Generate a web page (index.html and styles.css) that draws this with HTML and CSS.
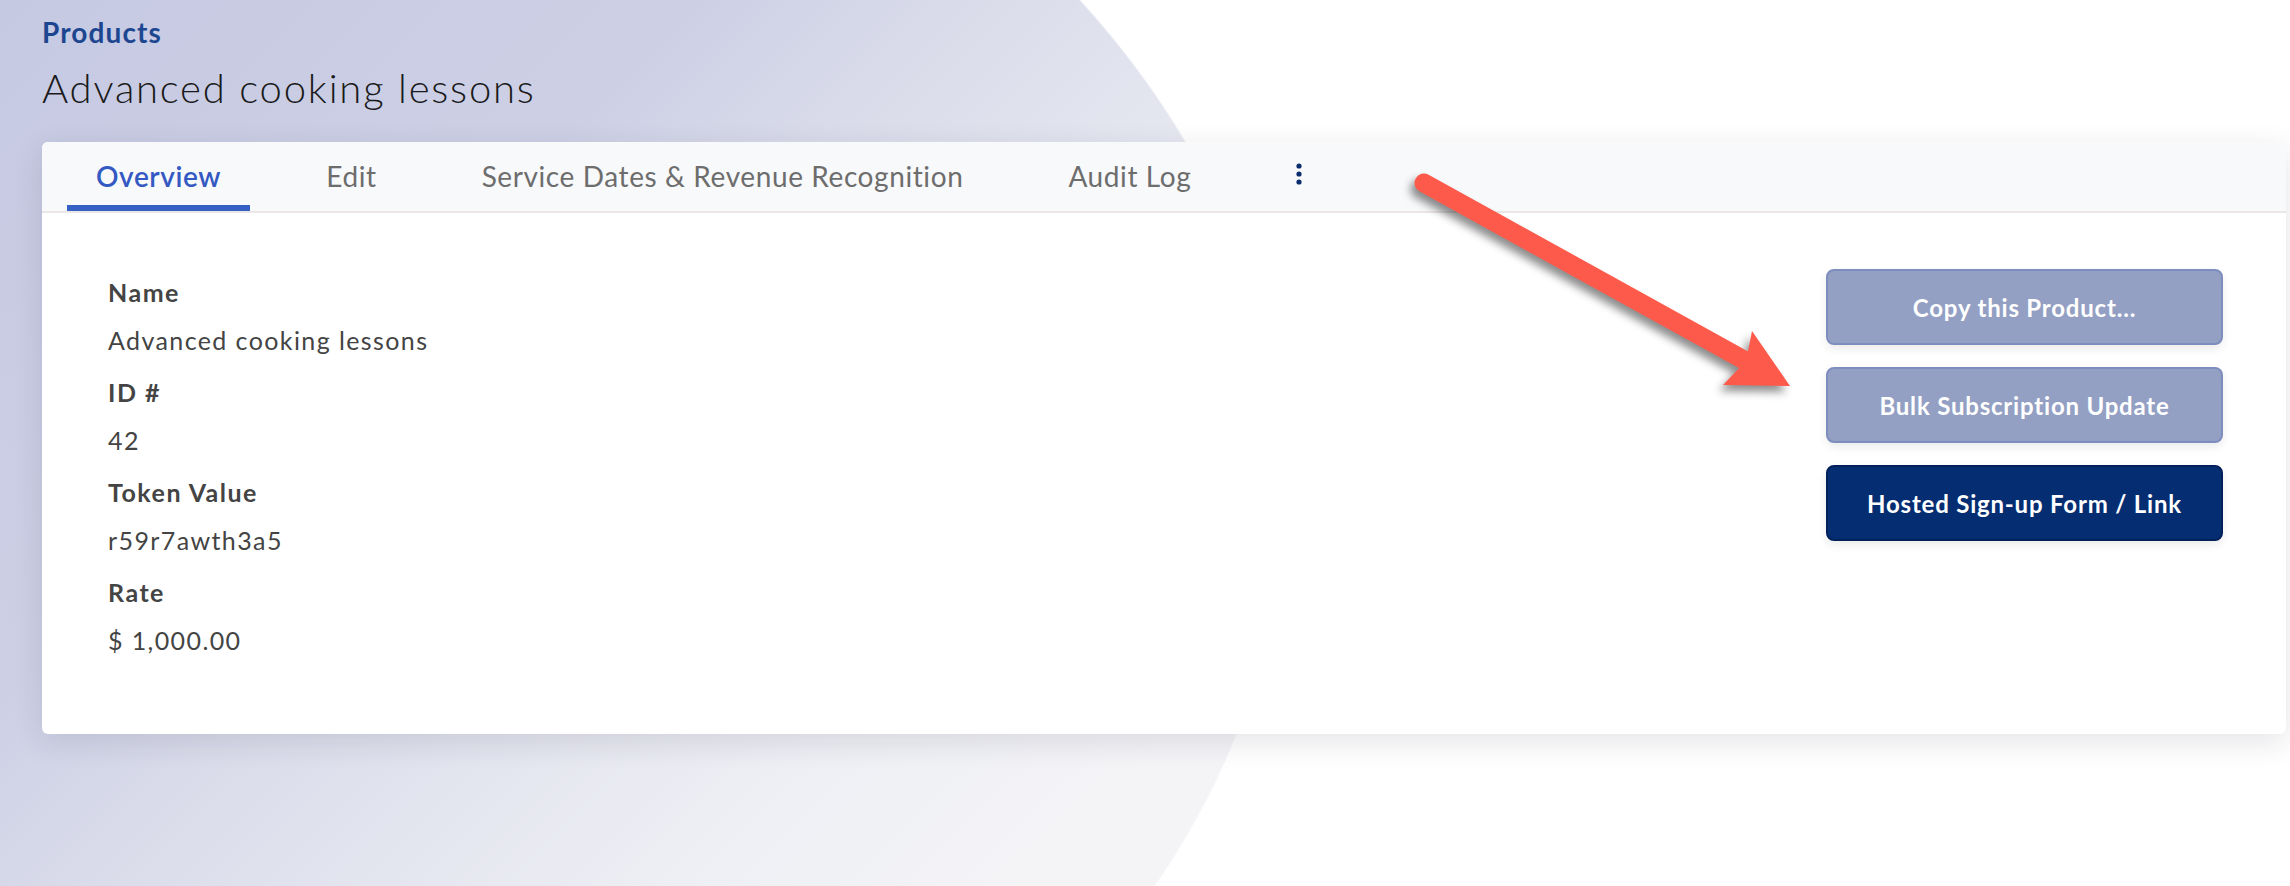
FILE: index.html
```html
<!DOCTYPE html>
<html lang="en">
<head>
    <meta charset="UTF-8">
    <meta name="viewport" content="width=device-width, initial-scale=1.0">
    <title>Advanced cooking lessons - Products</title>
    <link rel="stylesheet" href="styles.css">
</head>
<body>
    <div class="page">
        <a class="crumb" href="#">Products</a>
        <h1 class="title">Advanced cooking lessons</h1>

        <div class="card">
            <!-- Tabs -->
            <nav class="tabs">
                <a class="tab active" href="#">Overview</a>
                <a class="tab" href="#">Edit</a>
                <a class="tab" href="#">Service Dates &amp; Revenue Recognition</a>
                <a class="tab" href="#">Audit Log</a>
                <a class="tab more" href="#">
                    <svg width="6" height="22" viewBox="0 0 6 22">
                        <circle cx="3" cy="3" r="2.6"/>
                        <circle cx="3" cy="11" r="2.6"/>
                        <circle cx="3" cy="19" r="2.6"/>
                    </svg>
                </a>
            </nav>

            <div class="card-body">
                <dl class="details">
                    <dt>Name</dt>
                    <dd>Advanced cooking lessons</dd>
                    <dt>ID #</dt>
                    <dd>42</dd>
                    <dt>Token Value</dt>
                    <dd>r59r7awth3a5</dd>
                    <dt>Rate</dt>
                    <dd>$ 1,000.00</dd>
                </dl>

                <div class="actions">
                    <button class="btn btn-muted">Copy this Product...</button>
                    <button class="btn btn-muted">Bulk Subscription Update</button>
                    <button class="btn btn-primary">Hosted Sign-up Form / Link</button>
                </div>
            </div>
        </div>
    </div>

    <!-- annotation arrow drawn over the page -->
    <svg class="annotation" width="2290" height="886" viewBox="0 0 2290 886">
        <g class="arrow">
            <line x1="1424" y1="183" x2="1744" y2="360" stroke="#fd5a4b" stroke-width="19" stroke-linecap="round"/>
            <path d="M1790 386 L1752 331 L1746 361 L1723 385 Z" fill="#fd5a4b"/>
        </g>
    </svg>
</body>
</html>
```

FILE: styles.css
```css
/* General reset */
* {
    box-sizing: border-box;
    margin: 0;
    padding: 0;
}

body {
    font-family: Lato, "Open Sans", sans-serif;
    width: 2290px;
    height: 886px;
    overflow: hidden;
    position: relative;
    background:
        radial-gradient(ellipse 1285px 906px at 0 490px, rgba(255, 255, 255, 0) 99.85%, #ffffff 100%),
        linear-gradient(135deg, #c5c9e2 0%, #cdd0e5 22%, #d9dbea 30%, #eeeff4 49%, #f4f4f7 60%);
}

.page {
    padding: 15px 4px 0 42px;
}

/* Header */
.crumb {
    display: block;
    font-size: 28px;
    line-height: 34px;
    font-weight: 700;
    letter-spacing: 1.1px;
    color: #1d4690;
    text-decoration: none;
}

.title {
    margin-top: 16px;
    font-size: 40px;
    line-height: 47px;
    font-weight: 300;
    letter-spacing: 1.8px;
    color: #1a1a1a;
}

/* Card */
.card {
    margin-top: 30px;
    background-color: #ffffff;
    border-radius: 6px;
    box-shadow: 0 8px 30px rgba(30, 30, 60, 0.12);
}

.tabs {
    display: flex;
    align-items: flex-end;
    gap: 47px;
    padding-left: 25px;
    background-color: #f8f9fb;
    border-bottom: 2px solid #ebe7e6;
    border-radius: 6px 6px 0 0;
}

.tab {
    display: block;
    padding: 17px 29px 12px;
    font-size: 28px;
    line-height: 34px;
    letter-spacing: 0.6px;
    color: #6d6d6d;
    text-decoration: none;
    border-bottom: 6px solid transparent;
}

.tab.active {
    color: #3459c2;
    font-weight: 600;
    border-bottom-color: #3561c4;
}

.tab.more {
    display: flex;
    align-items: center;
    height: 69px;
    padding-top: 0;
    padding-bottom: 0;
}

.tab.more svg {
    fill: #0b2d6e;
}

.card-body {
    display: flex;
    justify-content: space-between;
    align-items: flex-start;
    min-height: 521px;
    padding: 56px 63px 0 66px;
}

/* Product details */
.details {
    padding-top: 8px;
    color: #444;
}

.details dt {
    font-size: 25px;
    line-height: 30px;
    font-weight: 700;
    letter-spacing: 1.5px;
}

.details dd {
    font-size: 25px;
    line-height: 30px;
    letter-spacing: 1.4px;
    margin: 18px 0 22px;
}

/* Buttons */
.actions {
    display: flex;
    flex-direction: column;
    gap: 22px;
    width: 397px;
}

.btn {
    height: 76px;
    font-family: inherit;
    font-size: 24px;
    font-weight: 700;
    letter-spacing: 0.8px;
    color: #ffffff;
    border-radius: 8px;
    border: 2px solid;
    cursor: pointer;
    box-shadow: 0 4px 10px rgba(0, 0, 0, 0.08);
}

.btn-muted {
    background-color: #93a0c3;
    border-color: #7d8dbd;
}

.btn-primary {
    background-color: #042d72;
    border-color: #02215a;
}

/* Annotation overlay */
.annotation {
    position: absolute;
    top: 0;
    left: 0;
    pointer-events: none;
}

.arrow {
    filter: drop-shadow(-4px 6px 4px rgba(0, 0, 0, 0.45));
}
```
